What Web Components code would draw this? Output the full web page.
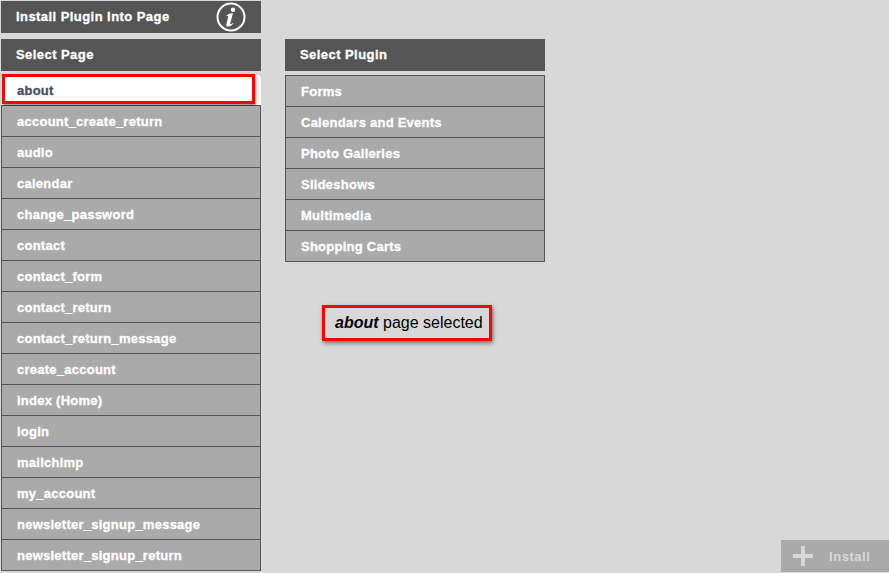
<!DOCTYPE html>
<html><head><meta charset="utf-8"><style>
html,body{margin:0;padding:0;height:100%;background:#d8d8d8;overflow:hidden;font-family:"Liberation Sans",Arial,sans-serif}
</style></head><body>
<template id="t-head"><style>
:host{display:flex;align-items:center;justify-content:space-between;height:32px;background:#555;color:#fff;font:bold 13px "Liberation Sans",Arial,sans-serif;letter-spacing:.44px;-webkit-text-stroke:.3px currentColor;padding:0 14px 2px 15px;box-sizing:border-box}
::slotted(svg){margin-bottom:-2px}
</style><span><slot></slot></span><slot name="icon"></slot></template>
<template id="t-list"><style>
:host{display:block;border:solid #555;border-width:1px 1px 0;box-sizing:border-box}
</style><slot></slot></template>
<template id="t-row"><style>
:host{display:block;position:relative;height:31px;box-sizing:border-box;border-bottom:1px solid #555;background:#aaa;color:#fff;font:bold 13px/30px "Liberation Sans",Arial,sans-serif;letter-spacing:.25px;-webkit-text-stroke:.3px currentColor;padding:1px 0 0 15px;white-space:nowrap}
:host([selected]){height:30px;margin:0 -1px;padding:0 0 0 16px;background:#fff;color:#47505c;border-bottom-color:#555}
:host([selected])::after{content:"";position:absolute;left:1px;top:-2px;width:253px;height:30px;box-sizing:border-box;border:3px solid #f00;box-shadow:1px 2px 3px rgba(0,0,0,.45)}
</style><slot></slot></template>
<template id="t-note"><style>
:host{display:block;width:170px;height:36px;box-sizing:border-box;border:3px solid #f00;box-shadow:1px 2px 4px rgba(0,0,0,.5);color:#000;font:16px/30px "Liberation Sans",Arial,sans-serif;padding-left:10px;white-space:nowrap}
</style><slot></slot></template>
<template id="t-btn"><style>
:host{display:flex;align-items:center;width:108px;height:32px;box-sizing:border-box;background:#aaa;color:#d8d8d8;font:bold 13px "Liberation Sans",Arial,sans-serif;letter-spacing:.55px;padding-left:12px;margin-bottom:1px}
svg{display:block;margin-right:16px}
</style><svg width="20" height="20" viewBox="0 0 20 20"><path d="M8 0h4v8h8v4h-8v8H8v-8H0V8h8z" fill="#d8d8d8"/></svg><slot></slot></template>
<template id="t-app"><style>
:host{display:flex;height:573px;box-sizing:border-box;padding:1px 0 0 1px}
.left{width:260px;display:flex;flex-direction:column}
.mid{width:260px;margin-left:24px;padding-top:38px;box-sizing:border-box}
.sp1{height:6px}.sp2{height:4px}
.left x-list{border-color:#fff #555 #555}
.right{flex:1;display:flex;justify-content:flex-end;align-items:flex-end}
x-note{margin:43px 0 0 37px}
</style>
<div class="left"><x-head>Install Plugin Into Page<svg slot="icon" width="32" height="32" viewBox="0 0 32 32" style="display:block"><circle cx="16" cy="16" r="13.5" fill="none" stroke="#fff" stroke-width="2"/><circle cx="18" cy="8.8" r="2.2" fill="#fff"/><path d="M11.8 14.4c1.6-1.6 3.6-2.3 6.2-2.2l-2.8 10.2c-.2 1 .6 1.1 1.2.7l1.6-1.1.4.6c-1.5 1.8-3.3 2.9-5.3 2.9-1.5 0-2.1-1-1.7-2.6l1.8-6.9c.2-.9-.4-1.1-1.9-.9z" fill="#fff"/></svg></x-head><div class="sp1"></div><x-head>Select Page</x-head><div class="sp2"></div>
<x-list><x-row selected>about</x-row><x-row>account_create_return</x-row><x-row>audio</x-row><x-row>calendar</x-row><x-row>change_password</x-row><x-row>contact</x-row><x-row>contact_form</x-row><x-row>contact_return</x-row><x-row>contact_return_message</x-row><x-row>create_account</x-row><x-row>index (Home)</x-row><x-row>login</x-row><x-row>mailchimp</x-row><x-row>my_account</x-row><x-row>newsletter_signup_message</x-row><x-row>newsletter_signup_return</x-row></x-list></div>
<div class="mid"><x-head>Select Plugin</x-head><div class="sp2"></div>
<x-list><x-row>Forms</x-row><x-row>Calendars and Events</x-row><x-row>Photo Galleries</x-row><x-row>Slideshows</x-row><x-row>Multimedia</x-row><x-row>Shopping Carts</x-row></x-list>
<x-note><b><i>about</i></b> page selected</x-note></div>
<div class="right"><x-btn>Install</x-btn></div></template>
<x-app></x-app>
<script>
for(const [n,t] of [["x-head","t-head"],["x-list","t-list"],["x-row","t-row"],["x-note","t-note"],["x-btn","t-btn"],["x-app","t-app"]]){
customElements.define(n,class extends HTMLElement{constructor(){super();this.attachShadow({mode:"open"}).append(document.getElementById(t).content.cloneNode(true))}});
}
</script></body></html>
